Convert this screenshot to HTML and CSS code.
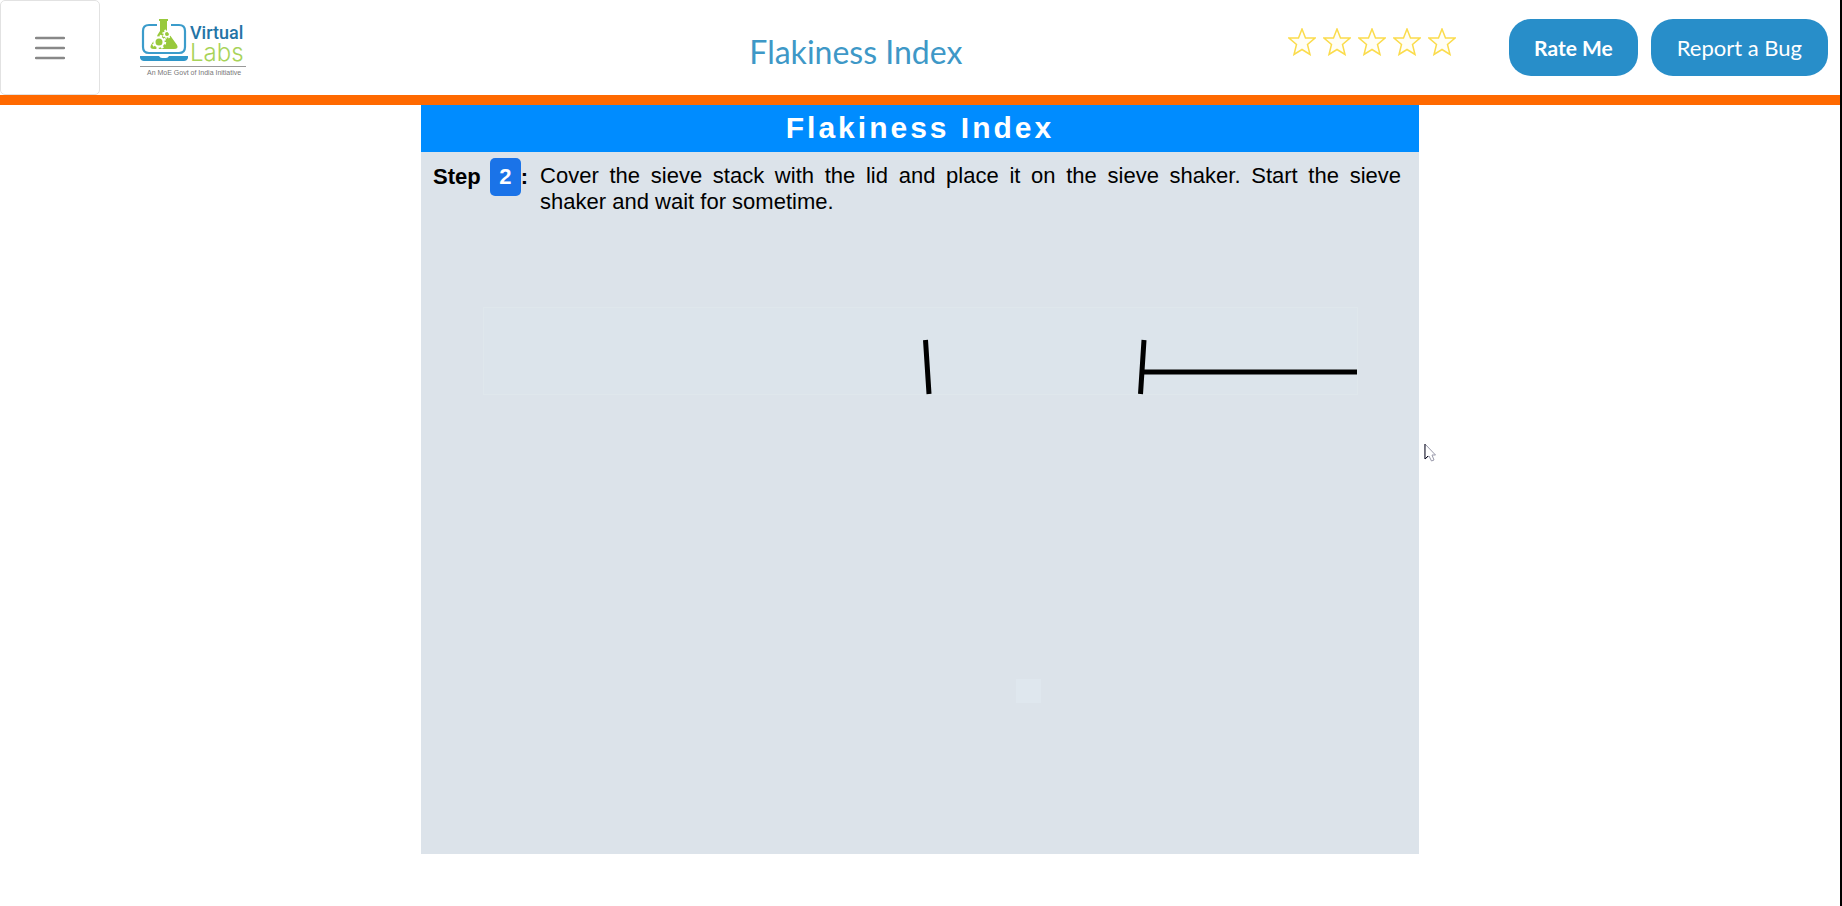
FILE: index.html
```html
<!DOCTYPE html>
<html lang="en">
<head>
<meta charset="utf-8">
<title>Flakiness Index</title>
<link rel="stylesheet" href="styles.css">
</head>
<body>
<header class="topbar">
  <div class="brand">
    <button class="menu" type="button" aria-label="Menu">
      <svg width="30" height="24" viewBox="0 0 30 24" fill="none" stroke="#888" stroke-width="2.4" stroke-linecap="round"><path d="M1 2H29M1 12H29M1 22H29"/></svg>
    </button>
    <a class="logo" href="#" aria-label="Virtual Labs">
      <svg width="112" height="60" viewBox="0 0 112 60">
        <path d="M17 7H9Q3 7 3 13V29Q3 35 9 35H39Q45 35 45 29V13Q45 7 39 7H31" fill="none" stroke="#3b9ccb" stroke-width="2.2"/>
        <path d="M0 38H19Q20 40 22 40H26Q28 40 29 38H48V40Q47 43 44 43H4Q1 43 0 40Z" fill="#2f96c9"/>
        <path d="M19 1H28V3H27V13L37 27Q39 31 34 31H14Q9 31 11 27L20 13V3H19Z" fill="#98c93c"/>
        <circle cx="19" cy="24" r="4.6" fill="none" stroke="#fff" stroke-width="2.2"/>
        <circle cx="19" cy="24" r="6.2" fill="none" stroke="#fff" stroke-width="2" stroke-dasharray="2.4 2.47"/>
        <circle cx="27" cy="16" r="2.8" fill="none" stroke="#fff" stroke-width="1.6"/>
        <circle cx="27" cy="16" r="4" fill="none" stroke="#fff" stroke-width="1.4" stroke-dasharray="1.6 1.54"/>
        <path d="M0 48.500H106" stroke="#999"/>
        <text class="logo-virtual" x="50" y="21">Virtual</text>
        <text class="logo-labs" x="50" y="43">Labs</text>
        <text class="logo-tag" x="7" y="57">An MoE Govt of India Initiative</text>
      </svg>
    </a>
  </div>
  <h1 class="title">Flakiness Index</h1>
  <div class="actions">
    <div class="stars" role="img" aria-label="Rating">
      <svg class="star" viewBox="0 0 28 28"><path d="M14 1L17.500 10H27L19.500 16.500L22 26.500L14 21.500L6 26.500L8.500 16.500L1 10H10.500Z"/></svg>
      <svg class="star" viewBox="0 0 28 28"><path d="M14 1L17.500 10H27L19.500 16.500L22 26.500L14 21.500L6 26.500L8.500 16.500L1 10H10.500Z"/></svg>
      <svg class="star" viewBox="0 0 28 28"><path d="M14 1L17.500 10H27L19.500 16.500L22 26.500L14 21.500L6 26.500L8.500 16.500L1 10H10.500Z"/></svg>
      <svg class="star" viewBox="0 0 28 28"><path d="M14 1L17.500 10H27L19.500 16.500L22 26.500L14 21.500L6 26.500L8.500 16.500L1 10H10.500Z"/></svg>
      <svg class="star" viewBox="0 0 28 28"><path d="M14 1L17.500 10H27L19.500 16.500L22 26.500L14 21.500L6 26.500L8.500 16.500L1 10H10.500Z"/></svg>
    </div>
    <button class="btn btn-rate" type="button">Rate Me</button>
    <button class="btn btn-bug" type="button">Report a Bug</button>
  </div>
</header>
<main class="lab">
  <h2 class="lab-title">Flakiness Index</h2>
  <div class="step">
    <div class="step-label">Step <span class="step-number">2</span>:</div>
    <p class="step-text">Cover the sieve stack with the lid and place it on the sieve shaker. Start the sieve shaker&nbsp;and wait for sometime.</p>
  </div>
  <svg class="scene" viewBox="0 0 998 620" role="img" aria-label="Sieve shaker animation">
    <rect x="62.500" y="73.500" width="874" height="87" fill="#dce4eb" stroke="#dfe7ec"/>
    <g stroke="#000" stroke-width="5" fill="none">
      <path d="M504.500 106L508 160M723 106L719.500 160M722 138H936"/>
    </g>
    <rect x="595" y="445" width="25" height="24" fill="#dfe7ee"/>
  </svg>
</main>
<svg class="cursor" width="13" height="20" viewBox="0 0 13 20" fill="#fff" stroke="#99a" stroke-width="1"><path d="M1 1L11.500 12H8L10 17L7.500 18L5 13L1 16Z"/><path d="M1 1V16L4 13" stroke="#112"/></svg>
</body>
</html>
```
FILE: styles.css
```css
* { box-sizing: border-box; }
body {
  margin: 0;
  min-height: 100vh;
  border-right: 2px solid #000;
  background: #fff;
  font-family: "Liberation Sans", Arial, sans-serif;
}
.topbar {
  display: grid;
  grid-template-columns: 464fr auto 536fr;
  align-items: center;
  height: 105px;
  border-bottom: 10px solid #ff6900;
  padding-right: 12px;
}
.brand {
  display: flex;
  align-items: center;
  gap: 40px;
}
.menu {
  display: flex;
  align-items: center;
  justify-content: center;
  width: 100px;
  height: 95px;
  padding: 0;
  border: 1px solid #e2e2e2;
  border-radius: 5px;
  background: #fff;
}
.logo { display: flex; }
.logo-virtual { font: 500 18px Roboto, sans-serif; fill: #2474a6; }
.logo-labs { font: 300 24px Inter, sans-serif; fill: #a8d35a; }
.logo-tag { font: 7px "Liberation Sans", Arial, sans-serif; fill: #777; }
.title {
  margin: 0;
  padding-top: 9px;
  color: #3e98c7;
  font: 400 32px/40px Lato, sans-serif;
}
.actions {
  display: flex;
  align-items: center;
  justify-content: flex-end;
  gap: 13px;
}
.stars {
  display: flex;
  gap: 7px;
  margin: 0 40px 12px 0;
}
.star {
  width: 28px;
  height: 28px;
  fill: #fffef5;
  stroke: #fbdc4c;
  stroke-width: 1.5;
}
.btn {
  height: 57px;
  padding: 0 25px;
  border: 0;
  border-radius: 22px;
  background: #288ec9;
  color: #fff;
  font: 400 22px Lato, sans-serif;
  white-space: nowrap;
}
.btn-rate {
  font-size: 21px;
  font-weight: 700;
}
.btn-bug { padding: 0 26px; }
.lab {
  width: 54.24%;
  min-height: 749px;
  margin: 0 auto;
  background: #dce3ea;
}
.lab-title {
  margin: 0;
  padding-bottom: 2px;
  background: #008cff;
  color: #fff;
  font-size: 30px;
  line-height: 45px;
  letter-spacing: 3px;
  text-align: center;
}
.step {
  display: flex;
  gap: 12px;
  padding: 6px 18px 0 12px;
  font-size: 22px;
  line-height: 26px;
}
.step-label {
  flex: none;
  font-weight: 700;
  line-height: 38px;
}
.step-number {
  display: inline-block;
  width: 31px;
  margin-left: 3px;
  border-radius: 5px;
  background: #1a73e8;
  color: #fff;
  text-align: center;
}
.step-text {
  flex: 1;
  margin: 0;
  padding-top: 5px;
  text-align: justify;
}
.scene {
  display: block;
  width: 100%;
  margin-top: 19px;
}
.cursor {
  position: absolute;
  left: 1424px;
  top: 443px;
}
```
